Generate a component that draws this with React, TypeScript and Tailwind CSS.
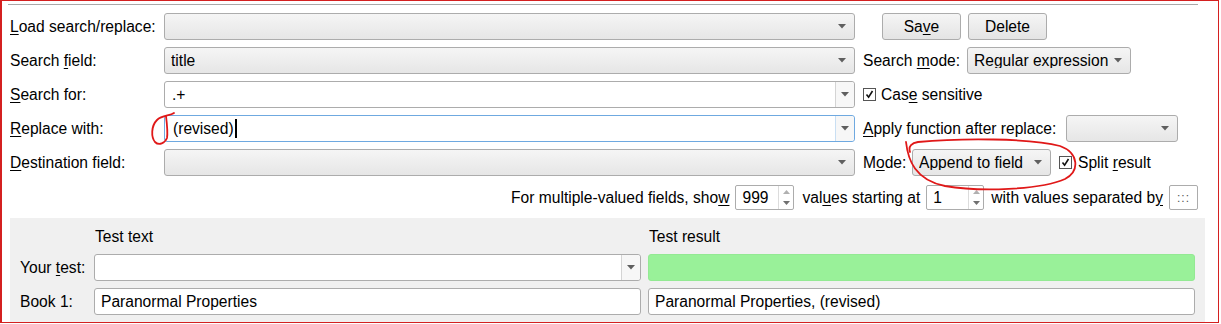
import React from 'react';

// mnemonic letter
const M: React.FC<{ children: React.ReactNode }> = ({ children }) => (
  <span className="underline decoration-1 underline-offset-[2px]">{children}</span>
);

const Arrow: React.FC = () => (
  <svg width="8" height="5" viewBox="0 0 8 5" className="shrink-0">
    <path d="M0 0 L8 0 L4 4.5 Z" fill="#5f5f5f" />
  </svg>
);

// read-only combobox (gradient face)
const Combo: React.FC<{ w: string; text?: string }> = ({ w, text }) => (
  <div
    className={`${w} h-[27px] shrink-0 flex items-center justify-between pl-[6px] pr-[8px] rounded-[3px] border border-[#acacac] bg-gradient-to-b from-[#f5f5f5] to-[#e6e6e6]`}
  >
    <span className="truncate">{text}</span>
    <Arrow />
  </div>
);

// editable combobox (white edit + drop button)
const EditCombo: React.FC<{ w: string; text?: React.ReactNode; focused?: boolean }> = ({ w, text, focused }) => (
  <div
    className={`${w} h-[27px] shrink-0 flex rounded-[3px] border bg-white ${
      focused ? 'border-[#6fa9e0]' : 'border-[#acacac]'
    }`}
  >
    <div className="flex-1 flex items-center pl-[7px] min-w-0">{text}</div>
    <div
      className={`w-[19px] flex items-center justify-center border-l ${
        focused ? 'border-[#c9dff3]' : 'border-[#d4d4d4]'
      } bg-[#f7f7f7] rounded-r-[3px]`}
    >
      <Arrow />
    </div>
  </div>
);

const CheckBox: React.FC = () => (
  <div className="w-[13px] h-[13px] shrink-0 border border-[#555] bg-white flex items-center justify-center">
    <svg width="9" height="9" viewBox="0 0 9 9">
      <path d="M1.5 4.5 L3.6 7.2 L7.5 1" stroke="#111" strokeWidth="1.6" fill="none" />
    </svg>
  </div>
);

const Spin: React.FC<{ w: string; value: string }> = ({ w, value }) => (
  <div className={`${w} h-[25px] shrink-0 flex border border-[#acacac] rounded-[2px] bg-white`}>
    <div className="flex-1 flex items-center pl-[6px]">{value}</div>
    <div className="w-[15px] flex flex-col border-l border-[#dcdcdc]">
      <div className="flex-1 flex items-center justify-center">
        <svg width="7" height="4" viewBox="0 0 7 4">
          <path d="M0 4 L7 4 L3.5 0 Z" fill="#b0b0b0" />
        </svg>
      </div>
      <div className="flex-1 flex items-center justify-center">
        <svg width="7" height="4" viewBox="0 0 7 4">
          <path d="M0 0 L7 0 L3.5 4 Z" fill="#707070" />
        </svg>
      </div>
    </div>
  </div>
);

const Button: React.FC<{ children: React.ReactNode; className?: string }> = ({ children, className }) => (
  <div
    className={`w-[79px] h-[27px] shrink-0 flex items-center justify-center rounded-[3px] border border-[#acacac] bg-gradient-to-b from-[#f5f5f5] to-[#e4e4e4] ${className ?? ''}`}
  >
    {children}
  </div>
);

const TextBox: React.FC<{ text?: string }> = ({ text }) => (
  <div className="w-[547px] h-[27px] shrink-0 flex items-center pl-[6px] bg-white border border-[#acacac] rounded-[3px]">
    {text}
  </div>
);

export default function App() {
  return (
    <div className="relative w-[1221px] h-[324px] overflow-hidden bg-white text-black text-[15.6px] leading-none font-['Liberation_Sans',Arial,sans-serif]">
      <div className="w-[1219px] h-[323px] overflow-hidden border-l-2 border-t border-r border-b border-[#d42020] flex flex-col">
        {/* top separator */}
        <div className="mt-[3px] ml-[6px] w-[1190px] h-px bg-[#a9a9a9] shrink-0" />

        <div className="pl-[8px] pt-[8px] flex flex-col gap-[7px]">
          <div className="flex items-center h-[27px]">
            <span className="w-[154px] shrink-0"><M>L</M>oad search/replace:</span>
            <Combo w="w-[691px]" />
            <Button className="ml-[27px]">Sa<M>v</M>e</Button>
            <Button className="ml-[7px]">Delete</Button>
          </div>

          <div className="flex items-center h-[27px]">
            <span className="w-[154px] shrink-0">Search <M>f</M>ield:</span>
            <Combo w="w-[691px]" text="title" />
            <span className="ml-[8px] w-[104px] shrink-0">Search <M>m</M>ode:</span>
            <Combo w="w-[164px]" text="Regular expression" />
          </div>

          <div className="flex items-center h-[27px]">
            <span className="w-[154px] shrink-0"><M>S</M>earch for:</span>
            <EditCombo w="w-[691px]" text=".+" />
            <div className="ml-[8px]"><CheckBox /></div>
            <span className="ml-[5px]">Cas<M>e</M> sensitive</span>
          </div>

          <div className="flex items-center h-[27px]">
            <span className="w-[154px] shrink-0"><M>R</M>eplace with:</span>
            <EditCombo
              w="w-[691px]"
              focused
              text={
                <span className="flex items-center pl-[1px]">
                  (revised)
                  <span className="inline-block w-[2px] h-[19px] bg-black ml-px" />
                </span>
              }
            />
            <span className="ml-[8px] w-[203px] shrink-0"><M>A</M>pply function after replace:</span>
            <Combo w="w-[112px]" />
          </div>

          <div className="flex items-center h-[27px]">
            <span className="w-[154px] shrink-0"><M>D</M>estination field:</span>
            <Combo w="w-[691px]" />
            <span className="ml-[8px] w-[49px] shrink-0">M<M>o</M>de:</span>
            <Combo w="w-[139px]" text="Append to field" />
            <div className="ml-[8px]"><CheckBox /></div>
            <span className="ml-[6px]">Split <M>r</M>esult</span>
          </div>

          <div className="flex items-center justify-end h-[25px] w-[1188px] mt-[2px]">
            <span>For multiple-valued fields, sho<M>w</M></span>
            <div className="ml-[6px]"><Spin w="w-[59px]" value="999" /></div>
            <span className="ml-[8px]">val<M>u</M>es starting at</span>
            <div className="ml-[6px]"><Spin w="w-[58px]" value="1" /></div>
            <span className="ml-[7px]">with values separated b<M>y</M></span>
            <div className="ml-[6px] w-[29px] h-[25px] flex items-center justify-center border border-[#acacac] rounded-[2px] bg-white text-[#555] text-[12px] tracking-[1px]">
              :::
            </div>
          </div>
        </div>

        {/* test panel */}
        <div className="mt-[8px] ml-[8px] w-[1195px] flex-1 bg-[#f0f0f0] pl-[10px] pr-[10px] pt-[9px] flex flex-col gap-[7px]">
          <div className="flex items-center h-[20px]">
            <span className="w-[75px] shrink-0" />
            <span className="w-[554px] shrink-0">Test text</span>
            <span>Test result</span>
          </div>
          <div className="flex items-center h-[27px]">
            <span className="w-[74px] shrink-0">Your <M>t</M>est:</span>
            <EditCombo w="w-[547px]" />
            <div className="ml-[7px] w-[547px] h-[27px] shrink-0 rounded-[3px] bg-[#99f199] border border-[#93e993]" />
          </div>
          <div className="flex items-center h-[27px]">
            <span className="w-[74px] shrink-0">Book 1:</span>
            <TextBox text="Paranormal Properties" />
            <div className="ml-[7px]"><TextBox text="Paranormal Properties, (revised)" /></div>
          </div>
          <div className="flex items-center h-[27px]">
            <span className="w-[74px] shrink-0" />
            <TextBox />
            <div className="ml-[7px]"><TextBox /></div>
          </div>
        </div>
      </div>

      {/* hand-drawn red annotations */}
      <svg className="absolute inset-0 pointer-events-none" width="1221" height="324" viewBox="0 0 1221 324">
        <path
          d="M174 113 C 170 116, 162 115, 157 120 C 151 126, 151 137, 155 142 C 159 146, 165 143, 167 138 C 168 132, 167 124, 166 116"
          stroke="#e01818"
          strokeWidth="1.8"
          fill="none"
          strokeLinecap="round"
        />
        <path
          d="M906 142 C 908 160, 915 180, 945 186 C 980 192, 1040 190, 1065 179 C 1080 171, 1079 153, 1060 146 C 1030 138, 960 138, 918 142 C 912 143, 908 146, 910 152"
          stroke="#e01818"
          strokeWidth="1.8"
          fill="none"
          strokeLinecap="round"
        />
      </svg>
    </div>
  );
}
